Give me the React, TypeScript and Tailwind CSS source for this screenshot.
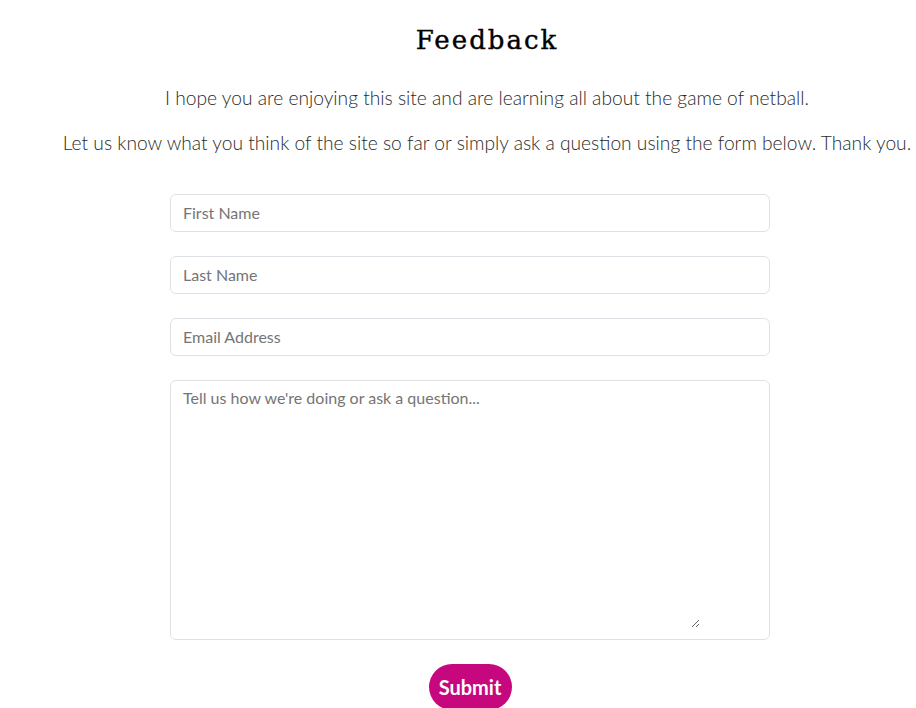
export default function App() {
  return (
    <div className="w-[916px] h-[708px] overflow-hidden bg-white" style={{ fontFamily: "Lato, 'Noto Sans', sans-serif" }}>
      <div className="pl-[58px] text-center">
        <h1 className="pt-[22px] text-[26px] leading-[36px] tracking-[2px] text-black [-webkit-text-stroke:0.4px_black]" style={{ fontFamily: "'DejaVu Serif', serif" }}>Feedback</h1>
        <p className="mt-[26px] text-[19.2px] leading-[28px] font-light text-[#2a2a2a]">I hope you are enjoying this site and are learning all about the game of netball.</p>
        <p className="mt-[17px] text-[19.2px] leading-[28px] font-light text-[#2a2a2a]">Let us know what you think of the site so far or simply ask a question using the form below. Thank you.</p>
      </div>
      <form className="ml-[170px] mt-[37px] w-[600px] flex flex-col gap-[24px]">
        <input placeholder="First Name" className="h-[38px] w-full rounded-[6px] border border-[#dee2e6] px-[12px] pb-[2px] text-[16px] placeholder:text-[#757575] outline-none" />
        <input placeholder="Last Name" className="h-[38px] w-full rounded-[6px] border border-[#dee2e6] px-[12px] pb-[2px] text-[16px] placeholder:text-[#757575] outline-none" />
        <input placeholder="Email Address" className="h-[38px] w-full rounded-[6px] border border-[#dee2e6] px-[12px] pb-[2px] text-[16px] placeholder:text-[#757575] outline-none" />
        <div className="h-[260px] w-full rounded-[6px] border border-[#dee2e6] pb-[11px]">
          <textarea placeholder="Tell us how we're doing or ask a question..." className="block h-[247px] w-[529px] resize px-[12px] py-[5px] text-[16px] placeholder:text-[#757575] outline-none" />
        </div>
        <div className="flex justify-center">
          <button type="button" className="h-[46px] w-[83px] rounded-full bg-[#c6077e] text-[20px] font-bold text-white">Submit</button>
        </div>
      </form>
    </div>
  );
}
